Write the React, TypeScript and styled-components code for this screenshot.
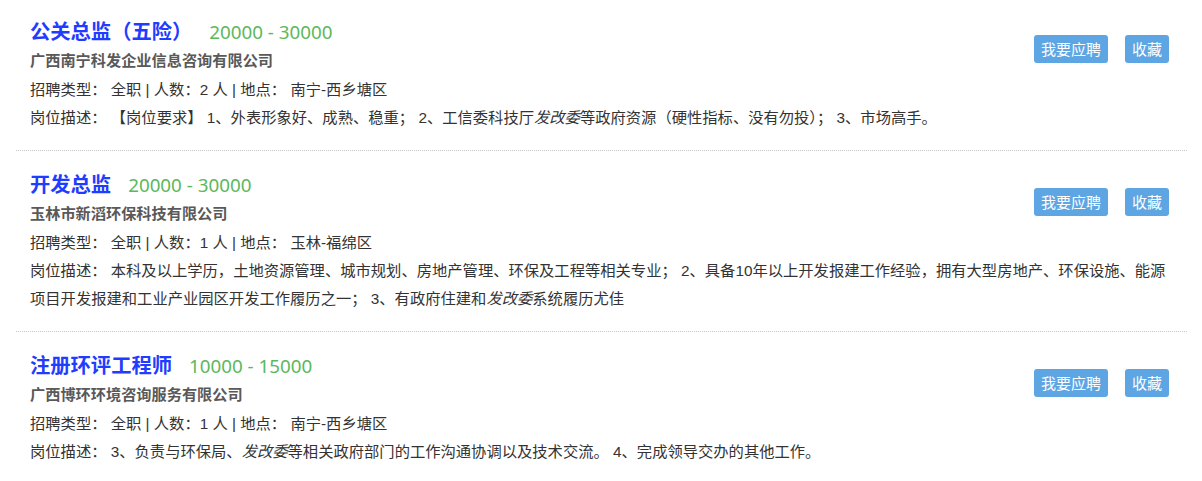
import React from "react";
import styled, { createGlobalStyle } from "styled-components";

const GlobalStyle = createGlobalStyle`
  html, body {
    margin: 0;
    padding: 0;
    background: #ffffff;
  }
  body {
    font-family: "Liberation Sans", "Noto Sans CJK SC", sans-serif;
    color: #333333;
  }
  em {
    font-style: italic;
  }
`;

const List = styled.div`
  margin: 0 15px 0 16px;
`;

const Item = styled.div`
  display: grid;
  grid-template-columns: 1fr auto;
  padding: 18px 18px 18px 14px;
  border-bottom: 1px dotted #c8c8c8;

  &:first-child {
    padding-top: 16px;
  }
`;

const Head = styled.div`
  display: flex;
  flex-direction: column;
  min-width: 0;
`;

const TitleRow = styled.div`
  display: flex;
  align-items: baseline;
  height: 28px;
  line-height: 28px;
`;

const Title = styled.a`
  font-family: "Noto Sans CJK SC", sans-serif;
  font-size: 20.3px;
  font-weight: 700;
  color: #1f3cff;
  text-decoration: none;
`;

const Salary = styled.span`
  margin-left: 17px;
  font-family: "Noto Sans", "Noto Sans CJK SC", sans-serif;
  font-size: 18.8px;
  color: #5cb85c;
`;

const Company = styled.div`
  margin-top: 1px;
  font-family: "Noto Sans CJK SC", sans-serif;
  font-size: 15.2px;
  font-weight: 700;
  line-height: 28px;
  color: #595959;
`;

const Info = styled.div`
  margin-top: 3px;
  font-family: "Liberation Sans", "Noto Sans CJK SC", sans-serif;
  font-size: 15.3px;
  line-height: 28px;
  color: #333333;
`;

const Desc = styled.div`
  grid-column: 1 / -1;
  font-family: "Liberation Sans", "Noto Sans CJK SC", sans-serif;
  font-size: 15.3px;
  line-height: 28px;
  color: #333333;
`;

const Label = styled.span`
  white-space: nowrap;
`;

const Actions = styled.div`
  display: flex;
  gap: 17px;
  align-self: start;
  margin-top: 19px;
`;

const Button = styled.button`
  height: 28px;
  padding: 0 7px;
  border: none;
  border-radius: 3px;
  background: #5da5e3;
  color: #ffffff;
  font-family: "Noto Sans CJK SC", sans-serif;
  font-size: 15px;
  line-height: 28px;
  cursor: pointer;
`;

type Job = {
  title: string;
  salary: string;
  company: string;
  count: number;
  place: string;
  desc: React.ReactNode;
};

const jobs: Job[] = [
  {
    title: "公关总监（五险）",
    salary: "20000 - 30000",
    company: "广西南宁科发企业信息咨询有限公司",
    count: 2,
    place: "南宁-西乡塘区",
    desc: (
      <>
        【岗位要求】 1、外表形象好、成熟、稳重； 2、工信委科技厅<em>发改委</em>等政府资源（硬性指标、没有勿投）； 3、市场高手。
      </>
    ),
  },
  {
    title: "开发总监",
    salary: "20000 - 30000",
    company: "玉林市新滔环保科技有限公司",
    count: 1,
    place: "玉林-福绵区",
    desc: (
      <>
        本科及以上学历，土地资源管理、城市规划、房地产管理、环保及工程等相关专业； 2、具备10年以上开发报建工作经验，拥有大型房地产、环保设施、能源项目开发报建和工业产业园区开发工作履历之一； 3、有政府住建和<em>发改委</em>系统履历尤佳
      </>
    ),
  },
  {
    title: "注册环评工程师",
    salary: "10000 - 15000",
    company: "广西博环环境咨询服务有限公司",
    count: 1,
    place: "南宁-西乡塘区",
    desc: (
      <>
        3、负责与环保局、<em>发改委</em>等相关政府部门的工作沟通协调以及技术交流。 4、完成领导交办的其他工作。
      </>
    ),
  },
];

export default function App() {
  return (
    <>
      <GlobalStyle />
      <List>
        {jobs.map((job) => (
          <Item key={job.title}>
            <Head>
              <TitleRow>
                <Title href="#">{job.title}</Title>
                <Salary>{job.salary}</Salary>
              </TitleRow>
              <Company>{job.company}</Company>
              <Info>
                招聘类型： 全职 | 人数：{job.count} 人 | 地点： {job.place}
              </Info>
            </Head>
            <Actions>
              <Button>我要应聘</Button>
              <Button>收藏</Button>
            </Actions>
            <Desc>
              <Label>岗位描述：</Label> {job.desc}
            </Desc>
          </Item>
        ))}
      </List>
    </>
  );
}
